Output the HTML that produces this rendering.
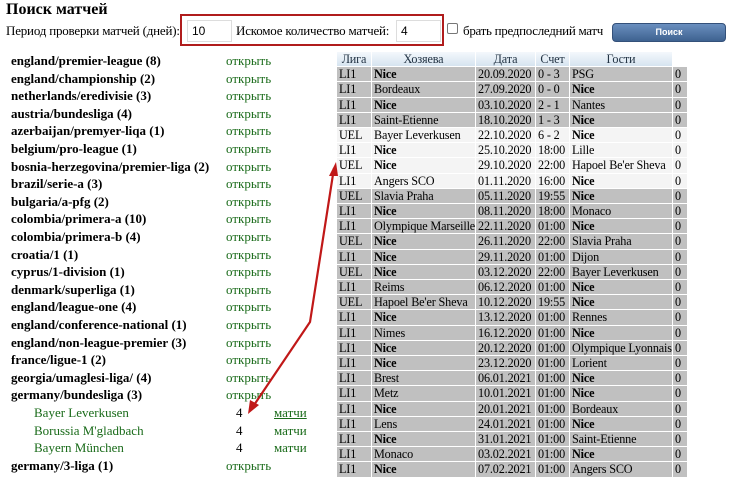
<!DOCTYPE html>
<html><head><meta charset="utf-8"><style>
*{margin:0;padding:0;box-sizing:border-box}
body{width:730px;height:476px;overflow:hidden;background:#fff;font-family:"Liberation Serif",serif;font-size:13px;color:#000;position:relative}
.a{position:absolute;white-space:nowrap}
.b{font-weight:bold}
.g{color:#1a6b1a}
.t{position:absolute;left:337px;top:52px}
.r{position:absolute;left:0;height:14.2px;line-height:14px;font-size:12.2px}
.c{position:absolute;top:0;height:14.2px;padding-left:2px;overflow:hidden;white-space:nowrap;letter-spacing:-0.15px}
.gr .c{background:#c0c0c0}
.wh .c{background:#f4f4f4}
.hd .c{background:linear-gradient(#f4f8fc,#d6e4f0);text-align:center;padding:0;color:#234}
.in{position:absolute;top:20px;width:45px;height:22px;border:1px solid #ddd;font-family:'Liberation Sans',sans-serif;font-size:12px;line-height:20px;padding-left:4px;background:#fff}
</style></head><body>
<div class="a b" style="left:6px;top:1px;font-size:16px">Поиск матчей</div>
<div class="a" style="left:6px;top:23px;font-size:13px;letter-spacing:-0.2px">Период проверки матчей (дней):</div>
<div class="a" style="left:180px;top:14px;width:264px;height:32px;border:2px solid #b01c1c"></div>
<div class="in" style="left:187px">10</div>
<div class="a" style="left:236px;top:23px;font-size:13px;letter-spacing:-0.2px">Искомое количество матчей:</div>
<div class="in" style="left:396px">4</div>
<div class="a" style="left:447px;top:23px;width:11px;height:11px;border:1px solid #777;border-radius:2px"></div>
<div class="a" style="left:463px;top:23px;font-size:13px;letter-spacing:-0.3px">брать предпоследний матч</div>
<div class="a" style="left:612px;top:23px;width:114px;height:19px;border-radius:4px;background:linear-gradient(#6a8fbf,#3e6290);border:1px solid #34517a;color:#fff;font-family:'Liberation Sans',sans-serif;font-size:9px;font-weight:bold;text-align:center;line-height:17px">Поиск</div>
<div id="L"></div>
<div class="t" id="T"></div>
<svg class="a" style="left:0;top:0" width="730" height="476">
<polyline points="334,168 310,322 252,408" fill="none" stroke="#c01818" stroke-width="2.2"/>
<polygon points="336,162 329,176 338,176" fill="#c01818"/>
<polygon points="248,414 250,400 259,405" fill="#c01818"/>
</svg>
<script>
var L=[["england/premier-league (8)"],["england/championship (2)"],["netherlands/eredivisie (3)"],["austria/bundesliga (4)"],["azerbaijan/premyer-liqa (1)"],["belgium/pro-league (1)"],["bosnia-herzegovina/premier-liga (2)"],["brazil/serie-a (3)"],["bulgaria/a-pfg (2)"],["colombia/primera-a (10)"],["colombia/primera-b (4)"],["croatia/1 (1)"],["cyprus/1-division (1)"],["denmark/superliga (1)"],["england/league-one (4)"],["england/conference-national (1)"],["england/non-league-premier (3)"],["france/ligue-1 (2)"],["georgia/umaglesi-liga/ (4)"],["germany/bundesliga (3)"],["Bayer Leverkusen",1],["Borussia M'gladbach",1],["Bayern München",1],["germany/3-liga (1)"]];
var h="";
L.forEach(function(x,i){var y=53+i*17.6;
if(x[1]){h+='<div class="a g" style="left:34px;top:'+y+'px">'+x[0]+'</div><div class="a" style="left:236px;top:'+y+'px">4</div><div class="a g" style="left:274px;top:'+y+'px;'+(i==20?'text-decoration:underline':'')+'">матчи</div>';}
else{h+='<div class="a b" style="left:11px;top:'+y+'px">'+x[0]+'</div><div class="a g" style="left:226px;top:'+y+'px">открыть</div>';}});
document.getElementById("L").innerHTML=h;
var R=[["LI1","Nice","20.09.2020","0 - 3","PSG",1],["LI1","Bordeaux","27.09.2020","0 - 0","Nice",2],["LI1","Nice","03.10.2020","2 - 1","Nantes",1],["LI1","Saint-Etienne","18.10.2020","1 - 3","Nice",2],["UEL","Bayer Leverkusen","22.10.2020","6 - 2","Nice",2,1],["LI1","Nice","25.10.2020","18:00","Lille",1,1],["UEL","Nice","29.10.2020","22:00","Hapoel Be'er Sheva",1,1],["LI1","Angers SCO","01.11.2020","16:00","Nice",2,1],["UEL","Slavia Praha","05.11.2020","19:55","Nice",2],["LI1","Nice","08.11.2020","18:00","Monaco",1],["LI1","Olympique Marseille","22.11.2020","01:00","Nice",2],["UEL","Nice","26.11.2020","22:00","Slavia Praha",1],["LI1","Nice","29.11.2020","01:00","Dijon",1],["UEL","Nice","03.12.2020","22:00","Bayer Leverkusen",1],["LI1","Reims","06.12.2020","01:00","Nice",2],["UEL","Hapoel Be'er Sheva","10.12.2020","19:55","Nice",2],["LI1","Nice","13.12.2020","01:00","Rennes",1],["LI1","Nimes","16.12.2020","01:00","Nice",2],["LI1","Nice","20.12.2020","01:00","Olympique Lyonnais",1],["LI1","Nice","23.12.2020","01:00","Lorient",1],["LI1","Brest","06.01.2021","01:00","Nice",2],["LI1","Metz","10.01.2021","01:00","Nice",2],["LI1","Nice","20.01.2021","01:00","Bordeaux",1],["LI1","Lens","24.01.2021","01:00","Nice",2],["LI1","Nice","31.01.2021","01:00","Saint-Etienne",1],["LI1","Monaco","03.02.2021","01:00","Nice",2],["LI1","Nice","07.02.2021","01:00","Angers SCO",1]];
var X=[0,35,139,199,233,336,351];
function row(cls,y,v){var s='<div class="r '+cls+'" style="top:'+y+'px">';for(var j=0;j<v.length;j++){if(v[j]===null)continue;s+='<div class="c" style="left:'+X[j]+'px;width:'+(X[j+1]-X[j]-1)+'px;'+(v[j].b?'font-weight:bold;':'')+'">'+(v[j].t!==undefined?v[j].t:v[j])+'</div>';}return s+'</div>';}
var t=row("hd",0,["Лига","Хозяева","Дата","Счет","Гости",null]);
R.forEach(function(r,i){t+=row(r[6]?"wh":"gr",15.2*(i+1),[r[0],{t:r[1],b:r[5]==1},r[2],r[3],{t:r[4],b:r[5]==2},"0"]);});
document.getElementById("T").innerHTML=t;
</script>
</body></html>
